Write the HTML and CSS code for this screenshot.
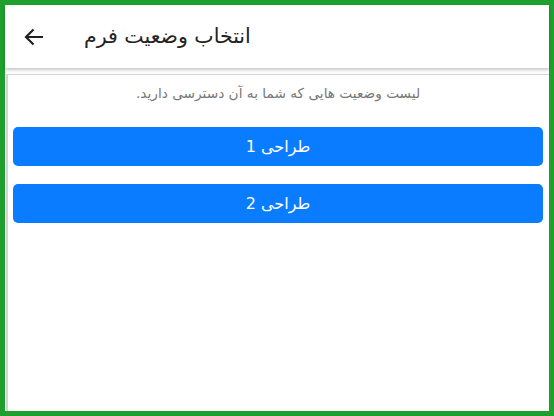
FILE: index.html
```html
<!DOCTYPE html>
<html lang="fa">
<head>
    <meta charset="UTF-8">
    <title>انتخاب وضعیت فرم</title>
    <meta name="viewport" content="width=device-width, initial-scale=1.0">
    <link rel="stylesheet" href="styles.css">
</head>
<body>
    <div class="frame">
        <header class="toolbar">
            <button class="back" aria-label="back">
                <svg width="20" height="18" viewBox="0 0 20 18">
                    <path d="M19 9H2M9.5 1.5L2 9l7.5 7.5" fill="none" stroke="#222" stroke-width="2.2"/>
                </svg>
            </button>
            <h1 class="title">انتخاب وضعیت فرم</h1>
        </header>

        <main class="content">
            <p class="hint">لیست وضعیت هایی که شما به آن دسترسی دارید.</p>
            <div class="list">
                <button class="state">طراحی 1</button>
                <button class="state">طراحی 2</button>
            </div>
        </main>
    </div>
</body>
</html>
```

FILE: styles.css
```css
* {
    margin: 0;
    padding: 0;
    box-sizing: border-box;
}
body {
    font-family: "DejaVu Sans", Roboto, sans-serif;
    background: #fff;
}
.frame {
    width: 554px;
    height: 416px;
    border: 5px solid #1e9f2e;
    display: flex;
    flex-direction: column;
    background: #fff;
}
.toolbar {
    height: 63px;
    flex-shrink: 0;
    display: flex;
    align-items: center;
    padding-left: 19px;
    background: #fff;
    box-shadow: 0 2px 3px rgba(0, 0, 0, 0.22);
    position: relative;
    z-index: 1;
}
.back {
    border: none;
    background: none;
    width: 20px;
    height: 18px;
    display: flex;
    margin-right: 40px;
}
.title {
    font-size: 20.5px;
    font-weight: normal;
    color: #222;
    direction: rtl;
    margin-top: -2px;
}
.content {
    flex: 1;
    margin: 6px 0 0 1px;
    border-left: 2px solid #d4d4d4;
    border-top: 1px solid #d4d4d4;
    padding: 0 6px 0 5px;
}
.hint {
    direction: rtl;
    text-align: center;
    font-size: 13.7px;
    color: #777;
    padding-top: 10px;
    height: 52px;
}
.list {
    display: flex;
    flex-direction: column;
    gap: 18px;
}
.state {
    height: 39px;
    border: none;
    border-radius: 5px;
    background: #0a7cff;
    color: #fff;
    font-family: "DejaVu Sans", Roboto, sans-serif;
    font-size: 16px;
    direction: rtl;
    cursor: pointer;
}
```
